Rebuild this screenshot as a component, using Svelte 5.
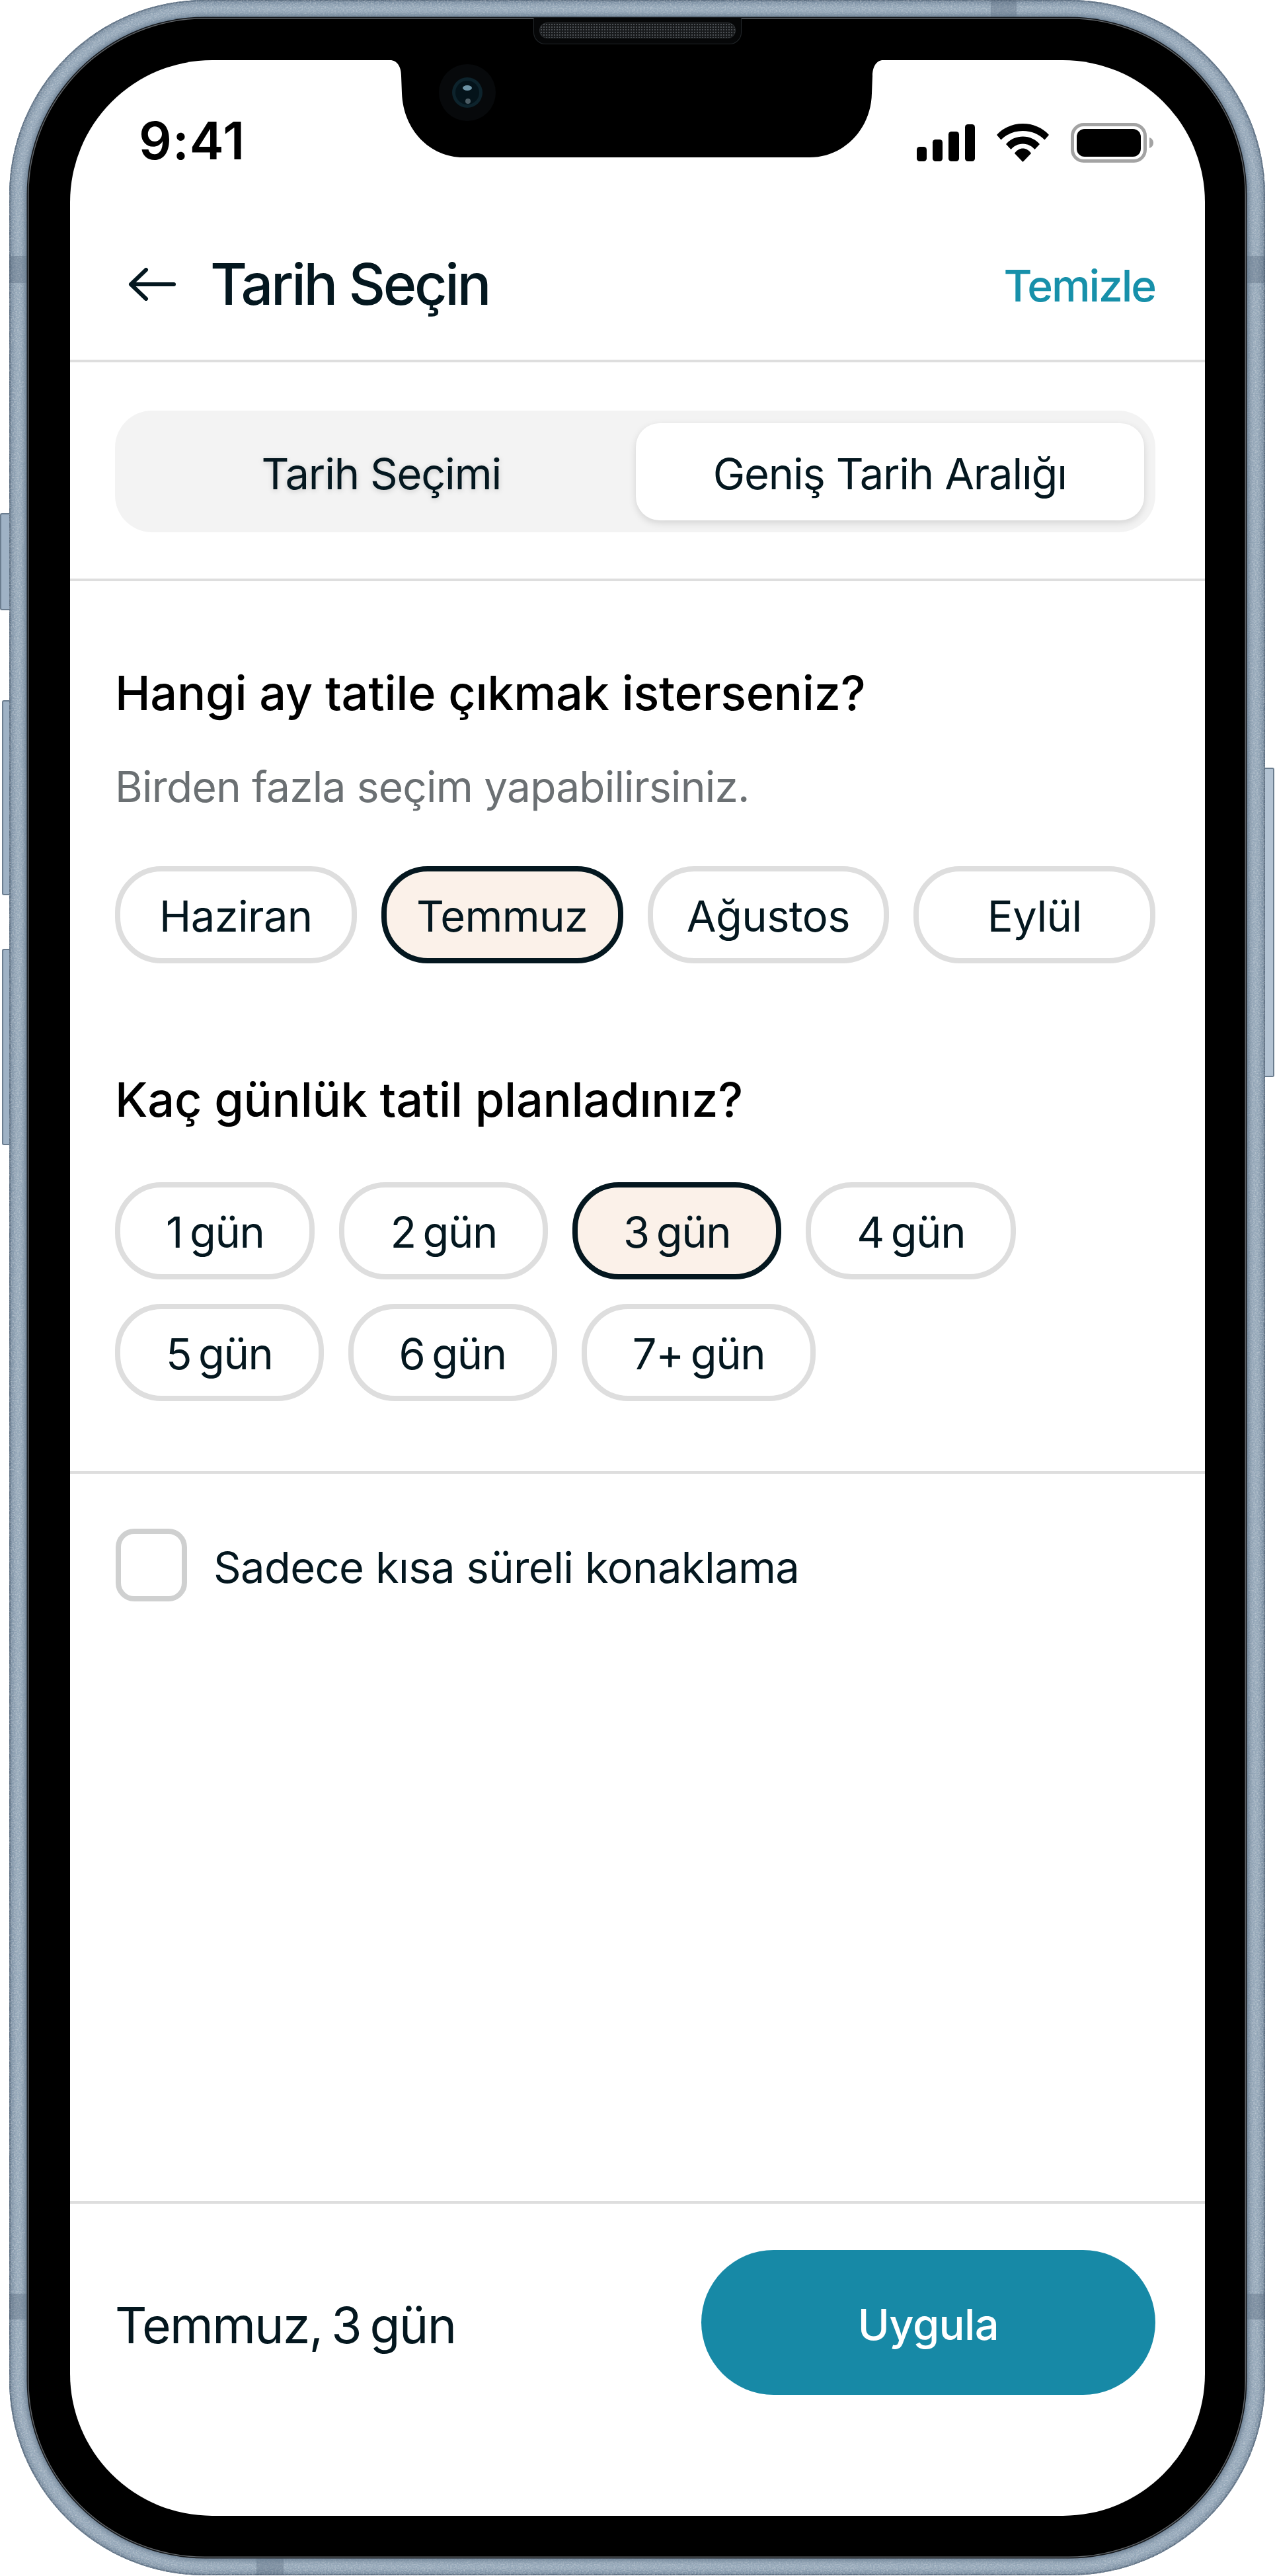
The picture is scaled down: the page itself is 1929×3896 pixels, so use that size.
<script lang="ts">
	const months = ['Haziran', 'Temmuz', 'Ağustos', 'Eylül'];
	const days = ['1 gün', '2 gün', '3 gün', '4 gün', '5 gün', '6 gün', '7+ gün'];

	let tab = $state(1);
	let month = $state('Temmuz');
	let day = $state('3 gün');
	let shortStay = $state(false);

	let summary = $derived(`${month}, ${day}`);

	function clear() {
		month = '';
		day = '';
		shortStay = false;
	}
</script>

<div class="page">
	<div class="phone">
		<!-- metal grain on the frame -->
		<svg class="grain" width="1900" height="3895" aria-hidden="true">
			<filter id="metal" x="0" y="0" width="100%" height="100%">
				<feTurbulence type="fractalNoise" baseFrequency="0.4 0.55" numOctaves="2" seed="4" />
				<feColorMatrix values="0 0 0 0 1  0 0 0 0 1  0 0 0 0 1  1.6 0 0 0 -0.62" />
			</filter>
			<rect width="1900" height="3895" rx="295" filter="url(#metal)" opacity="0.45" />
		</svg>

		<i class="band band-top"></i>
		<i class="band band-bottom"></i>
		<i class="band band-lt"></i>
		<i class="band band-rt"></i>
		<i class="band band-lb"></i>
		<i class="band band-rb"></i>

		<i class="side side-mute"></i>
		<i class="side side-up"></i>
		<i class="side side-down"></i>
		<i class="side side-power"></i>

		<div class="bezel">
			<div class="speaker"><div class="grill"></div></div>

			<div class="screen">
				<svg class="notch" width="746" height="148" viewBox="0 0 746 148" aria-hidden="true">
					<path d="M0 0C11 0 17 10 17 24L18 50C20 105 60 147 111 147H635C686 147 728 105 729 50L730 24C730 10 736 0 746 0Z" fill="#000" />
					<circle cx="117" cy="49" r="43" fill="#07090b" />
					<circle cx="117" cy="49" r="23" fill="#0d232c" />
					<circle cx="117" cy="49" r="18" fill="#04131a" />
					<ellipse cx="117" cy="42" rx="7" ry="4" fill="#6d93a5" />
					<circle cx="118" cy="62" r="4" fill="#4c5c64" />
				</svg>

				<div class="status">
					<span class="time">9:41</span>
					<div class="status-icons">
						<svg width="88" height="56" viewBox="0 0 88 56" aria-hidden="true">
							<rect x="0" y="34" width="15" height="22" rx="4.5" />
							<rect x="24" y="23" width="15" height="33" rx="4.5" />
							<rect x="48" y="11" width="16" height="45" rx="4.5" />
							<rect x="73" y="0" width="15" height="56" rx="4.5" />
						</svg>
						<svg width="79" height="58" viewBox="0 0 79 58" aria-hidden="true">
							<path d="M0 17C10 6 24 0 39.5 0S69 6 79 17L72.500 24.500C64 16 52.500 11 39.500 11S15 16 6.500 24.500Z" />
							<path d="M14 31C20 24 29 19.500 39.500 19.500S59 24 65 31L57.500 39C53 34 47 30.500 39.500 30.500S26 34 21.500 39Z" />
							<path d="M27 45C30 40 35 37.500 39.500 37.500S49 40 52 45L39.500 58Z" />
						</svg>
						<svg width="125" height="60" viewBox="0 0 125 60" aria-hidden="true">
							<rect x="2.500" y="2.500" width="110" height="55" rx="17" fill="none" stroke="#a3a3a3" stroke-width="5" />
							<rect x="9" y="9" width="97" height="42" rx="12" />
							<path d="M119 22C122.500 23 125 26 125 30S122.500 37 119 38Z" fill="#a3a3a3" />
						</svg>
					</div>
				</div>

				<header class="header">
					<button class="back" aria-label="Geri">
						<svg width="72" height="50" viewBox="0 0 72 50" fill="none" stroke="currentColor" stroke-width="6" stroke-linecap="round" stroke-linejoin="round">
							<path d="M69 25H4M27 3L4 25L27 47" />
						</svg>
					</button>
					<h1>Tarih Seçin</h1>
					<button class="clear" onclick={clear}>Temizle</button>
				</header>

				<div class="tabs-wrap">
					<div class="tabs">
						<button class="tab" class:active={tab === 0} onclick={() => (tab = 0)}>Tarih Seçimi</button>
						<button class="tab" class:active={tab === 1} onclick={() => (tab = 1)}>Geniş Tarih Aralığı</button>
					</div>
				</div>

				<section class="options">
					<h2>Hangi ay tatile çıkmak isterseniz?</h2>
					<p class="hint">Birden fazla seçim yapabilirsiniz.</p>
					<div class="months">
						{#each months as m}
							<button class="pill" class:selected={month === m} onclick={() => (month = m)}>{m}</button>
						{/each}
					</div>

					<h2 class="second">Kaç günlük tatil planladınız?</h2>
					<div class="days">
						{#each days as d}
							<button class="pill day" class:selected={day === d} onclick={() => (day = d)}>{d}</button>
						{/each}
					</div>
				</section>

				<label class="check">
					<input type="checkbox" bind:checked={shortStay} />
					<span class="box"></span>
					<span class="check-label">Sadece kısa süreli konaklama</span>
				</label>

				<footer class="footer">
					<span class="summary">{summary}</span>
					<button class="apply">Uygula</button>
				</footer>
			</div>
		</div>
	</div>
</div>

<style>
	:global(body) {
		margin: 0;
		background: #fff;
	}

	.page {
		width: 1929px;
		height: 3896px;
		padding-left: 14px;
		box-sizing: border-box;
		font-family: Inter, 'Liberation Sans', sans-serif;
		color: #04171f;
	}

	button {
		font: inherit;
		color: inherit;
		background: none;
		border: 0;
		padding: 0;
		cursor: pointer;
	}

	/* device */
	.phone {
		position: relative;
		width: 1900px;
		height: 3895px;
		box-sizing: border-box;
		padding: 27px 29px 27px 28px;
		border-radius: 295px;
		background: #97a9ba;
		box-shadow:
			inset 0 0 0 2px #5d6f82,
			inset 0 0 8px 5px #6f8397;
	}

	.grain {
		position: absolute;
		left: 0;
		top: 0;
	}

	.band {
		position: absolute;
		background: rgba(72, 90, 108, 0.3);
	}

	.band-top {
		left: 1485px;
		top: 0;
		width: 39px;
		height: 27px;
	}

	.band-bottom {
		left: 374px;
		bottom: 0;
		width: 41px;
		height: 27px;
	}

	.band-lt,
	.band-rt {
		top: 387px;
		width: 28px;
		height: 41px;
	}

	.band-lb,
	.band-rb {
		top: 3469px;
		width: 28px;
		height: 39px;
	}

	.band-lt,
	.band-lb {
		left: 0;
	}

	.band-rt,
	.band-rb {
		right: 0;
	}

	.side {
		position: absolute;
		box-sizing: border-box;
		background: #9fb2c5;
		border: 2px solid #6b7d8f;
	}

	.side-mute {
		left: -14px;
		top: 776px;
		width: 14px;
		height: 147px;
		border-right: 0;
		border-radius: 3px 0 0 3px;
	}

	.side-up {
		left: -11px;
		top: 1059px;
		width: 11px;
		height: 295px;
		border-right: 0;
		border-radius: 3px 0 0 3px;
	}

	.side-down {
		left: -11px;
		top: 1435px;
		width: 11px;
		height: 297px;
		border-right: 0;
		border-radius: 3px 0 0 3px;
	}

	.side-power {
		right: -14px;
		top: 1161px;
		width: 14px;
		height: 468px;
		border-left: 0;
		border-radius: 0 3px 3px 0;
		background: #b3c3d3;
	}

	.bezel {
		position: relative;
		height: 100%;
		box-sizing: border-box;
		padding: 64px 62px 63px 64px;
		border-radius: 268px;
		background: #000;
		box-shadow:
			0 0 0 1.5px #16191d,
			0 0 8px 4px #64788c,
			inset 0 0 0 1.5px #5f6367;
	}

	.speaker {
		position: absolute;
		left: 765px;
		top: 0;
		width: 315px;
		height: 40px;
		box-sizing: border-box;
		padding: 8px 9px 0;
		border: 1.5px solid #23272b;
		border-top: 0;
		border-radius: 0 0 18px 18px;
		background: #060708;
	}

	.grill {
		height: 22px;
		border-radius: 11px;
		background: radial-gradient(circle, #4b4f53 1px, transparent 1.6px) 0 0 / 4px 4px #17191b;
		box-shadow: 0 0 0 1px #2b2e31;
	}

	.screen {
		position: relative;
		height: 100%;
		display: flex;
		flex-direction: column;
		overflow: hidden;
		border-radius: 215px;
		background: #fff;
	}

	.notch {
		position: absolute;
		left: 484px;
		top: 0;
	}

	/* status bar */
	.status {
		display: flex;
		justify-content: space-between;
		align-items: center;
		padding: 83px 78px 0 104px;
	}

	.time {
		font-size: 78px;
		line-height: 78px;
		font-weight: 600;
		letter-spacing: 1px;
		color: #000;
	}

	.status-icons {
		display: flex;
		align-items: center;
		gap: 33px;
		margin-top: 5px;
	}

	/* header */
	.header {
		display: flex;
		align-items: center;
		padding: 128px 75px 64px 88px;
		border-bottom: 4px solid #dedede;
	}

	.back {
		display: flex;
		margin-right: 52px;
	}

	h1 {
		flex: 1;
		margin: 0;
		font-size: 86px;
		line-height: 100px;
		font-weight: 550;
		letter-spacing: -3.3px;
	}

	.clear {
		margin-top: 3px;
		font-size: 66px;
		line-height: 90px;
		font-weight: 500;
		letter-spacing: -2.1px;
		color: #1790aa;
	}

	/* tabs */
	.tabs-wrap {
		padding: 73px 75px 70px 68px;
		border-bottom: 4px solid #dedede;
	}

	.tabs {
		display: grid;
		grid-template-columns: 1fr 1fr;
		padding: 19px 17px 18px 18px;
		border-radius: 56px;
		background: #f3f3f3;
	}

	.tab {
		height: 147px;
		padding-top: 6px;
		font-size: 65px;
		font-weight: 400;
		letter-spacing: -1.2px;
		border-radius: 36px;
		text-shadow: 0 2px 8px rgba(0, 0, 0, 0.18);
	}

	.tab.active {
		background: #fff;
		text-shadow: none;
		box-shadow: 0 4px 12px rgba(0, 0, 0, 0.13);
	}

	/* month and day choices */
	.options {
		padding: 129px 75px 106px 68px;
		border-bottom: 4px solid #dedede;
	}

	h2 {
		margin: 0;
		font-size: 72px;
		line-height: 80px;
		font-weight: 500;
		letter-spacing: -0.25px;
		color: #000;
	}

	h2.second {
		margin-top: 166px;
	}

	.hint {
		margin: 67px 0 0;
		font-size: 64px;
		line-height: 70px;
		letter-spacing: -0.8px;
		color: #6b7073;
	}

	.months {
		display: grid;
		grid-template-columns: repeat(4, 1fr);
		gap: 37px;
		margin-top: 85px;
	}

	.days {
		display: flex;
		flex-wrap: wrap;
		gap: 37px;
		margin-top: 85px;
	}

	.pill {
		box-sizing: border-box;
		height: 147px;
		padding-top: 3px;
		font-size: 65px;
		font-weight: 400;
		letter-spacing: -0.6px;
		border: 8px solid #dedede;
		border-radius: 70px;
		background: #fff;
	}

	.pill.day {
		padding: 3px 69px 0;
		letter-spacing: -1.4px;
		word-spacing: -6px;
	}

	.pill.selected {
		background: #fbf1e9;
		border-color: #04171f;
	}

	/* checkbox */
	.check {
		display: flex;
		align-items: center;
		gap: 40px;
		padding: 83px 75px 0 69px;
		cursor: pointer;
	}

	.check input {
		position: absolute;
		opacity: 0;
		pointer-events: none;
	}

	.box {
		box-sizing: border-box;
		width: 108px;
		height: 110px;
		border: 8px solid #cfd0d0;
		border-radius: 28px;
	}

	.check input:checked + .box {
		background: #1789a6;
		border-color: #1789a6;
	}

	.check-label {
		font-size: 65px;
		line-height: 80px;
		letter-spacing: -0.6px;
		margin-top: 8px;
	}

	/* footer */
	.footer {
		margin-top: auto;
		display: flex;
		justify-content: space-between;
		align-items: center;
		padding: 70px 75px 183px 68px;
		border-top: 4px solid #dedede;
	}

	.summary {
		font-size: 75px;
		line-height: 90px;
		letter-spacing: -1.6px;
		word-spacing: -6px;
		margin-top: 8px;
	}

	.apply {
		width: 687px;
		height: 219px;
		padding-top: 6px;
		font-size: 65px;
		font-weight: 500;
		letter-spacing: -0.6px;
		color: #fff;
		border-radius: 110px;
		background: #1789a6;
	}
</style>
